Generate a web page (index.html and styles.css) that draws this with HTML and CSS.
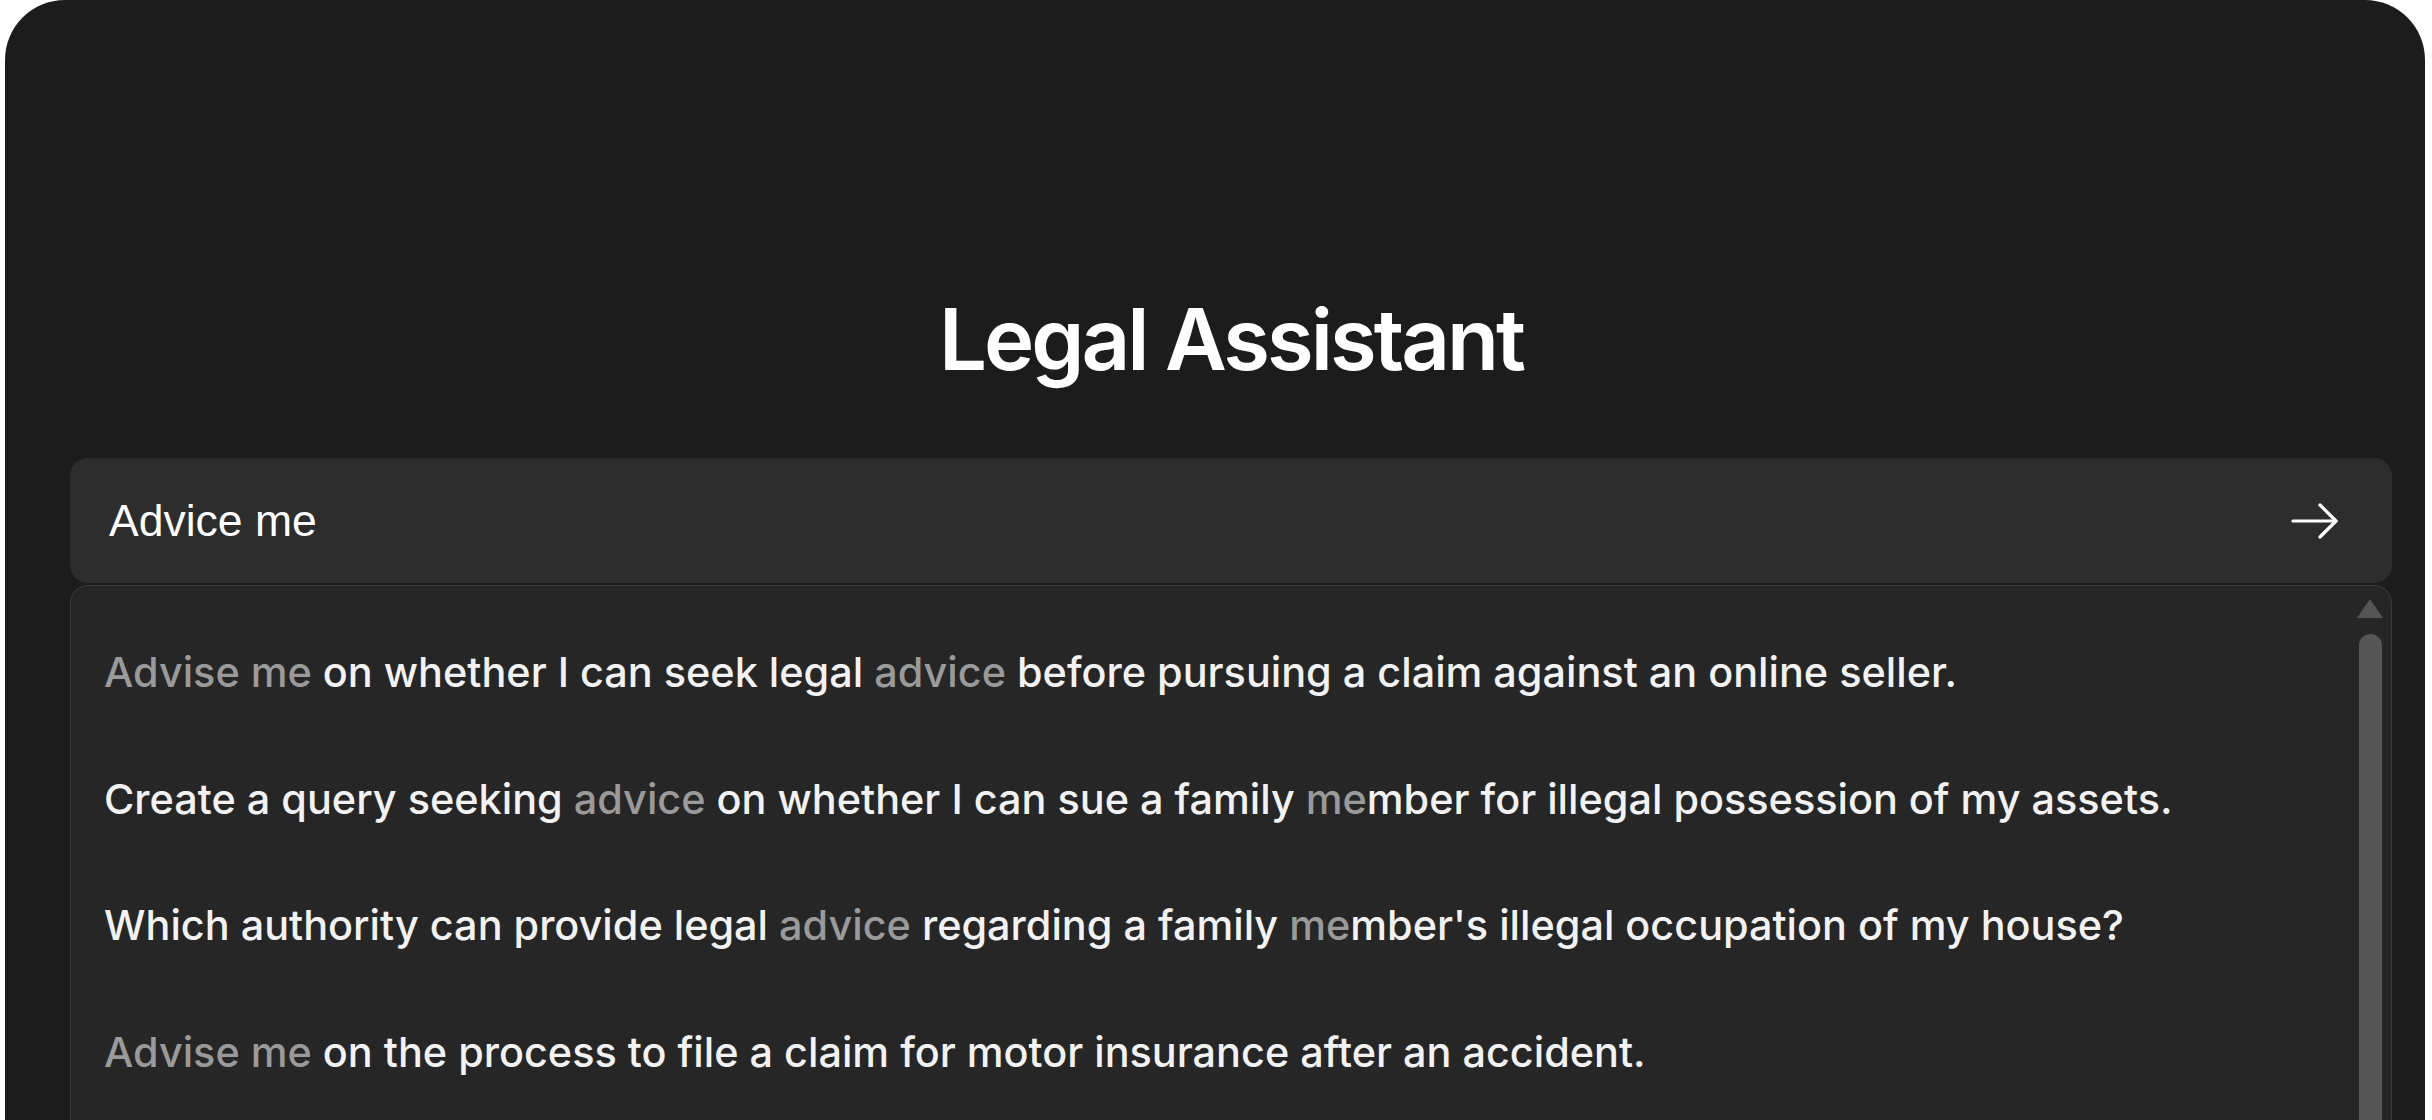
FILE: index.html
```html
<!DOCTYPE html>
<html lang="en">
<head>
<meta charset="utf-8">
<title>Legal Assistant</title>
<link rel="stylesheet" href="styles.css">
</head>
<body>
<div class="card">
  <h1 class="title">Legal Assistant</h1>
  <div class="search">
    <span class="query">Advice me</span>
    <svg class="send" width="48" height="36" viewBox="0 0 48 36" fill="none" stroke="#ffffff" stroke-width="3.2" stroke-linecap="round" stroke-linejoin="round">
      <path d="M2 18 H45"/>
      <path d="M29 2 L45 18 L29 34"/>
    </svg>
  </div>
  <div class="panel">
    <ul class="list">
      <li class="item"><span class="hl">Advise me</span>&nbsp;on whether I can seek legal&nbsp;<span class="hl">advice</span>&nbsp;before pursuing a claim against an online seller.</li>
      <li class="item">Create a query seeking&nbsp;<span class="hl">advice</span>&nbsp;on whether I can sue a family&nbsp;<span class="hl">me</span>mber for illegal possession of my assets.</li>
      <li class="item">Which authority can provide legal&nbsp;<span class="hl">advice</span>&nbsp;regarding a family&nbsp;<span class="hl">me</span>mber's illegal occupation of my house?</li>
      <li class="item"><span class="hl">Advise me</span>&nbsp;on the process to file a claim for motor insurance after an accident.</li>
    </ul>
    <div class="scrollbar">
      <div class="scroll-up"></div>
      <div class="scroll-thumb"></div>
    </div>
  </div>
</div>
</body>
</html>
```
FILE: styles.css
```css
html, body {
  margin: 0;
  padding: 0;
  background: #ffffff;
  overflow: hidden;
  height: 1120px;
}

.card {
  margin: 0 7px 0 5px;
  height: 1300px;
  background: #1c1c1c;
  border-radius: 60px 60px 0 0;
  padding: 290px 33px 0 65px;
  box-sizing: border-box;
}

.title {
  margin: 0;
  text-align: center;
  font-family: Inter, "Noto Sans", sans-serif;
  font-weight: 600;
  font-size: 85px;
  line-height: 100px;
  letter-spacing: -0.035em;
  color: #ffffff;
}

.search {
  margin-top: 68px;
  height: 125px;
  background: #2d2d2d;
  border-radius: 18px;
  display: flex;
  align-items: center;
  justify-content: space-between;
  padding: 0 53px 0 39px;
}

.query {
  font-family: "Liberation Sans", Arial, sans-serif;
  font-size: 44.5px;
  color: #ffffff;
}

.send {
  display: block;
}

.panel {
  margin-top: 2px;
  background: #262626;
  border: 1.5px solid #3a3a3a;
  border-bottom: none;
  border-radius: 18px 18px 0 0;
  display: flex;
  height: 700px;
}

.list {
  list-style: none;
  margin: 0;
  padding: 23px 0 0 33px;
  flex: 1;
}

.item {
  height: 126.5px;
  display: flex;
  align-items: center;
  font-family: Inter, "Noto Sans", sans-serif;
  font-size: 41.4px;
  font-weight: 500;
  color: #f2f2f2;
  white-space: nowrap;
}

.hl {
  color: #9a9a9a;
}

.scrollbar {
  width: 26px;
  margin-right: 8px;
  padding-top: 13px;
  display: flex;
  flex-direction: column;
  align-items: center;
}

.scroll-up {
  width: 0;
  height: 0;
  border-left: 13px solid transparent;
  border-right: 13px solid transparent;
  border-bottom: 19px solid #555555;
}

.scroll-thumb {
  margin-top: 16px;
  width: 23px;
  flex: 1;
  background: #555555;
  border-radius: 12px;
}
```
